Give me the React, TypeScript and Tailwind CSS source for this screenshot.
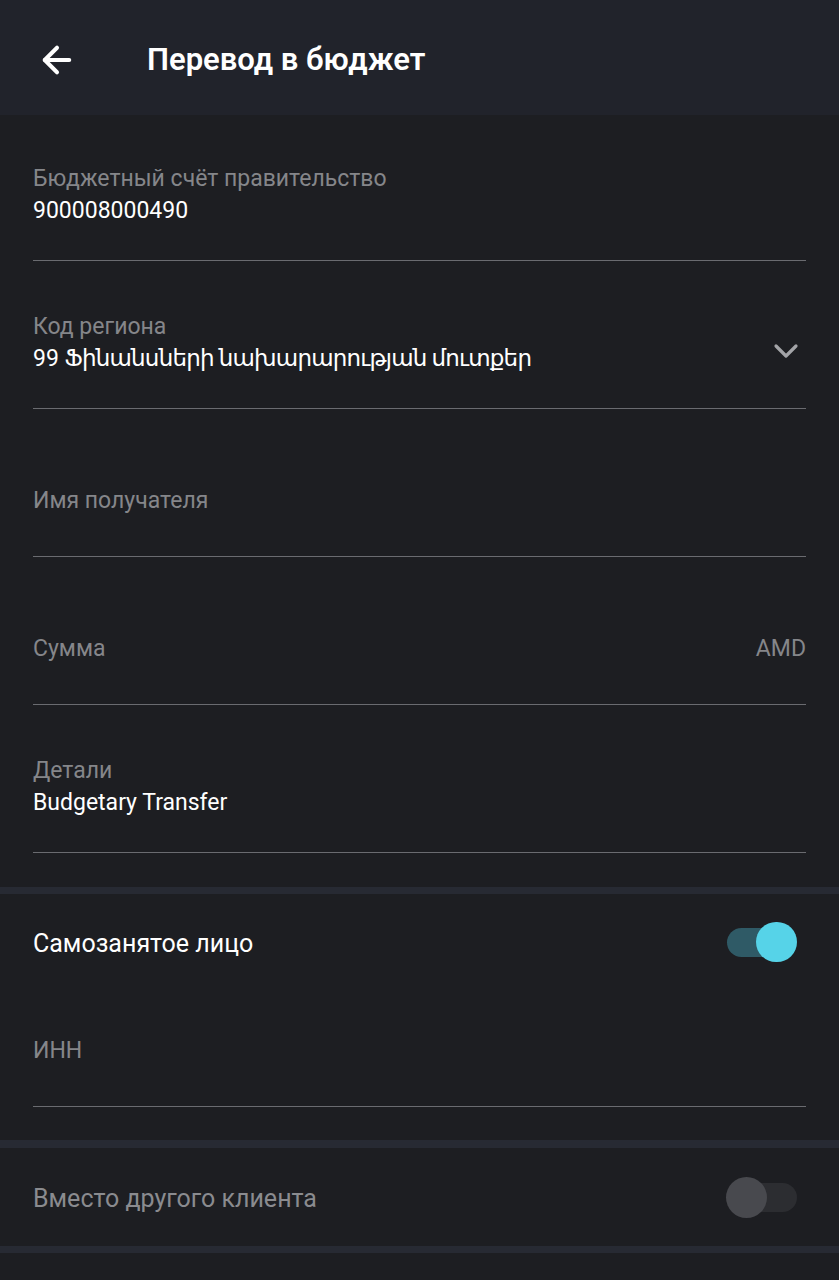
import { ArrowLeft } from "lucide-react";

const font = { fontFamily: 'Roboto, "DejaVu Sans", "Noto Sans", sans-serif' };

function Field({ label, value, right, first }: { label: string; value?: React.ReactNode; right?: React.ReactNode; first?: boolean }) {
  return (
    <div className="px-[33px]">
      <div className={`${first ? "h-[146px]" : "h-[148px]"} flex items-end border-b border-[#6a6b70]`}>
        {value ? (
          <div className="flex-1 flex items-center pb-[35px]">
            <div className="flex-1">
              <div className="text-[23px] leading-[28px] text-[#85868a]">{label}</div>
              <div className="mt-[4px] text-[23px] leading-[28px] text-white">{value}</div>
            </div>
            {right}
          </div>
        ) : (
          <div className="flex-1 flex items-center justify-between pb-[41px]">
            <div className="text-[23px] leading-[28px] text-[#85868a]">{label}</div>
            {right}
          </div>
        )}
      </div>
    </div>
  );
}

function Toggle({ on }: { on: boolean }) {
  return on ? (
    <div className="relative w-[70px] h-[40px] flex items-center">
      <div className="w-[63px] h-[29px] rounded-full bg-[#2f5a66]" />
      <div className="absolute right-0 top-0 w-[41px] h-[40px] rounded-full bg-[#56d3e8]" />
    </div>
  ) : (
    <div className="relative w-[71px] h-[41px] flex items-center">
      <div className="ml-[8px] w-[63px] h-[29px] rounded-full bg-[#2c2d31]" />
      <div className="absolute left-0 top-0 w-[41px] h-[41px] rounded-full bg-[#48494e]" />
    </div>
  );
}

function Chevron() {
  return (
    <svg width="26" height="18" viewBox="0 0 26 18" className="mr-[7px] mt-[16px]">
      <path d="M3 4 L13 14 L23 4" fill="none" stroke="#a3a4a8" strokeWidth="3.2" strokeLinecap="round" strokeLinejoin="round" />
    </svg>
  );
}

export default function App() {
  return (
    <div className="w-[839px] h-[1280px] bg-[#1d1e22] overflow-hidden" style={font}>
      <div className="h-[115px] bg-[#21232b] flex items-center pt-[5px]">
        <div className="w-[114px] flex justify-center">
          <ArrowLeft size={42} strokeWidth={2.3} className="text-white" />
        </div>
        <div className="ml-[33px] text-[31px] font-semibold text-white">Перевод в бюджет</div>
      </div>

      <Field first label="Бюджетный счёт правительство" value="900008000490" />
      <Field
        label="Код региона"
        value={
          <>
            99 <span className="tracking-[-0.8px]">Ֆինանսների նախարարության մուտքեր</span>
          </>
        }
        right={<Chevron />}
      />
      <Field label="Имя получателя" />
      <Field label="Сумма" right={<span className="text-[23px] leading-[28px] text-[#85868a]">AMD</span>} />
      <Field label="Детали" value="Budgetary Transfer" />

      <div className="h-[34px]" />
      <div className="h-[7px] bg-[#272a33]" />

      <div className="h-[100px] px-[33px] flex items-center justify-between">
        <span className="text-[25px] leading-[30px] text-white">Самозанятое лицо</span>
        <div className="mr-[9px] -mt-[4px]">
          <Toggle on />
        </div>
      </div>
      <div className="px-[33px]">
        <div className="h-[113px] flex items-end border-b border-[#6a6b70]">
          <div className="pb-[41px] text-[23px] leading-[28px] text-[#85868a]">ИНН</div>
        </div>
      </div>
      <div className="h-[33px]" />
      <div className="h-[8px] bg-[#272a33]" />

      <div className="h-[98px] px-[33px] flex items-center justify-between">
        <span className="text-[25px] leading-[30px] text-[#8a8b8f] mt-[3px]">Вместо другого клиента</span>
        <div className="mr-[9px]">
          <Toggle on={false} />
        </div>
      </div>
      <div className="h-[7px] bg-[#272a33]" />
    </div>
  );
}
